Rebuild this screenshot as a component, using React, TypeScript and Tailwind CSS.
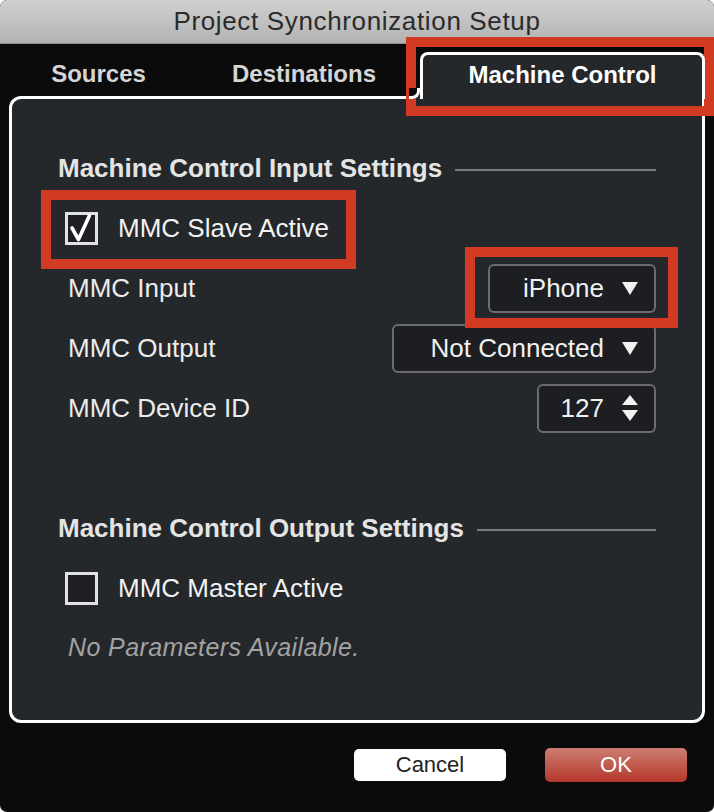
function CheckBox({ checked }: { checked: boolean }) {
  return (
    <div className="relative w-[33px] h-[33px] border-[3px] border-[#e2e2e2] bg-[#1e1f23]">
      {checked && (
        <svg className="absolute -left-[3px] -top-[3px] overflow-visible" width="33" height="33" viewBox="0 0 33 33">
          <path d="M7 16 L13.5 27.5 L24.5 3.5" stroke="#ffffff" strokeWidth="3.6" fill="none" strokeLinecap="round" strokeLinejoin="round" />
        </svg>
      )}
    </div>
  )
}

function Caret() {
  return (
    <svg width="16" height="13" viewBox="0 0 16 13">
      <polygon points="0,0 16,0 8,13" fill="#f2f2f2" />
    </svg>
  )
}

function Stepper() {
  return (
    <div className="flex flex-col gap-[5px]">
      <svg width="16" height="10" viewBox="0 0 16 10">
        <polygon points="8,0 16,10 0,10" fill="#f2f2f2" />
      </svg>
      <svg width="16" height="11" viewBox="0 0 16 11">
        <polygon points="0,0 16,0 8,11" fill="#f2f2f2" />
      </svg>
    </div>
  )
}

function Section({ title }: { title: string }) {
  return (
    <div className="h-[60px] flex items-center gap-[13px]">
      <span className="text-[26px] font-bold text-[#e4e4e4]">{title}</span>
      <div className="flex-1 h-[2px] bg-[#7a7a7a] mt-[4px]" />
    </div>
  )
}

function Row({ label, children }: { label: string; children: React.ReactNode }) {
  return (
    <div className="h-[60px] flex items-center justify-between">
      <span className="ml-[10px] text-[26px] text-[#ececec]">{label}</span>
      {children}
    </div>
  )
}

function Select({ value, width }: { value: string; width: string }) {
  return (
    <div className={`${width} h-[49px] rounded-[6px] border-2 border-[#6c6c6c] bg-[#1d1e21] flex items-center justify-end gap-[18px] pr-[16px]`}>
      <span className="text-[26px] text-[#f0f0f0]">{value}</span>
      <Caret />
    </div>
  )
}

export default function App() {
  return (
    <div className="w-[714px] h-[812px] bg-white font-['Liberation_Sans',Arial,sans-serif]">
      <div className="relative w-[714px] h-[812px] rounded-[7px] overflow-hidden bg-[#0b0b0b] flex flex-col">
        {/* title bar */}
        <div className="h-[44px] bg-gradient-to-b from-[#d0d0d0] to-[#b3b3b3] border-b border-[#8c8c8c] flex items-center justify-center">
          <span className="text-[26px] text-[#2b2b2b] tracking-[0.65px]">Project Synchronization Setup</span>
        </div>

        {/* tabs */}
        <div className="h-[52px] flex items-end">
          <div className="ml-[9px] w-[179px] h-[44px] flex items-center justify-center text-[24px] font-bold text-[#d6d6d6]">Sources</div>
          <div className="w-[232px] h-[44px] flex items-center justify-center text-[24px] font-bold text-[#d6d6d6]">Destinations</div>
          <div className="relative z-10 w-[285px] h-[47px] -mb-[3px] border-[3px] border-b-0 border-white rounded-t-[8px] bg-[#25282b] flex items-start justify-center pt-[2px]">
            <span className="text-[24px] font-bold text-white">Machine Control</span>
            <div className="absolute -left-[14px] bottom-0 w-[11px] h-[11px] bg-[#25282b]">
              <div className="w-[11px] h-[11px] bg-[#0b0b0b] border-r-[3px] border-b-[3px] border-white rounded-br-[8px]" />
            </div>
          </div>
        </div>

        {/* panel */}
        <div className="ml-[9px] w-[696px] h-[627px] border-[3px] border-white rounded-[12px] rounded-tr-none bg-[#25282b] px-[46px] pt-[39px]">
          <Section title="Machine Control Input Settings" />
          <div className="h-[60px] flex items-center gap-[20px] pl-[7px]">
            <CheckBox checked />
            <span className="text-[26px] text-[#f2f2f2]">MMC Slave Active</span>
          </div>
          <Row label="MMC Input">
            <Select value="iPhone" width="w-[168px]" />
          </Row>
          <Row label="MMC Output">
            <Select value="Not Connected" width="w-[264px]" />
          </Row>
          <Row label="MMC Device ID">
            <div className="w-[119px] h-[49px] rounded-[6px] border-2 border-[#6c6c6c] bg-[#1d1e21] flex items-center justify-end gap-[18px] pr-[16px]">
              <span className="text-[26px] text-[#f0f0f0]">127</span>
              <Stepper />
            </div>
          </Row>
          <div className="h-[60px]" />
          <Section title="Machine Control Output Settings" />
          <div className="h-[60px] flex items-center gap-[20px] pl-[7px]">
            <CheckBox checked={false} />
            <span className="text-[26px] text-[#f2f2f2]">MMC Master Active</span>
          </div>
          <div className="h-[60px] flex items-center pl-[10px]">
            <span className="text-[25px] italic text-[#a3a3a3] tracking-[0.4px]">No Parameters Available.</span>
          </div>
        </div>

        {/* buttons */}
        <div className="flex justify-end items-center gap-[39px] pr-[27px] pt-[25px]">
          <button className="w-[152px] h-[32px] rounded-[5px] bg-white text-[22px] text-[#222] leading-none">Cancel</button>
          <button className="w-[142px] h-[34px] rounded-[5px] bg-gradient-to-b from-[#cc7c72] to-[#b4362a] text-[22px] text-white leading-none">OK</button>
        </div>

        {/* red annotation boxes */}
        <div className="absolute left-[406px] top-[37px] w-[308px] h-[79px] border-[10px] border-[#d23a24]" />
        <div className="absolute left-[41px] top-[190px] w-[315px] h-[79px] border-[10px] border-[#d23a24]" />
        <div className="absolute left-[465px] top-[247px] w-[213px] h-[81px] border-[10px] border-[#d23a24]" />
      </div>
    </div>
  )
}
